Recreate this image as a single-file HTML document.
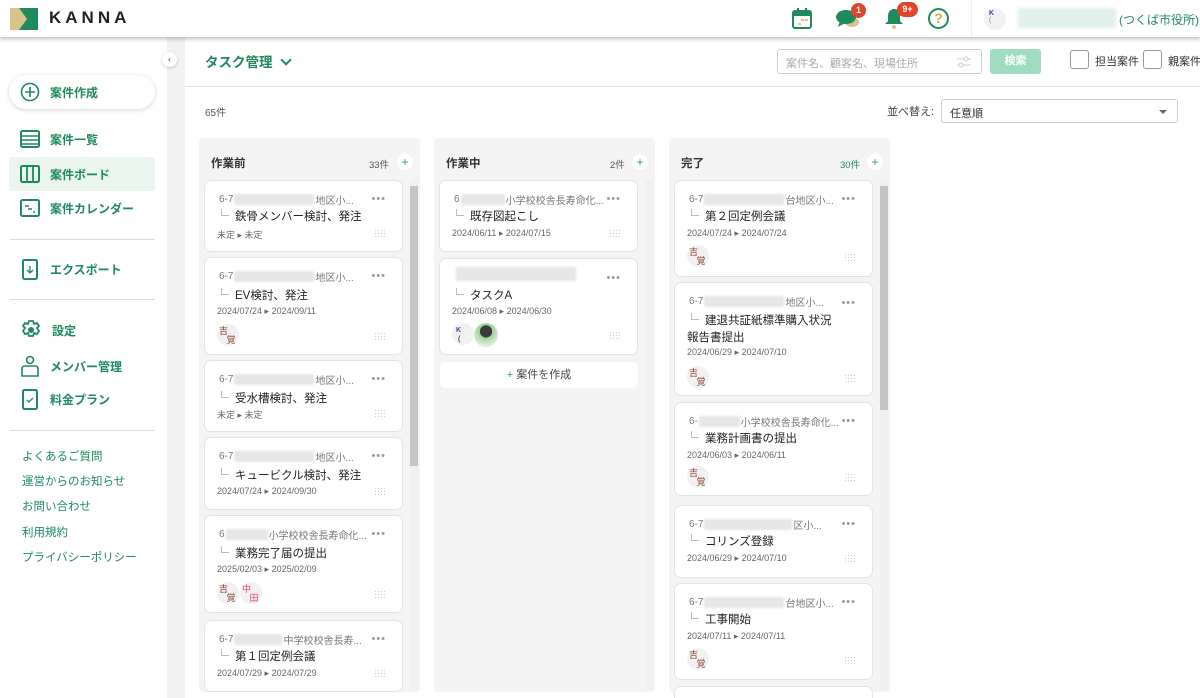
<!DOCTYPE html>
<html><head><meta charset="utf-8">
<style>
*{box-sizing:border-box;margin:0;padding:0}
body{width:1200px;height:698px;overflow:hidden;background:#fff;font-family:"Liberation Sans","Noto Sans CJK JP",sans-serif;position:relative;color:#333}
.a{position:absolute}
.hdr{left:0;top:0;width:1200px;height:37px;background:#fff;box-shadow:0 2px 4px rgba(0,0,0,.25);z-index:5}
.side{left:0;top:37px;width:167px;height:661px;background:#fff}
.strip{left:167px;top:37px;width:18px;height:661px;background:#f2f2f2}
.nav{left:20px;font-size:12px;font-weight:bold;color:#1e8a5e;display:flex;align-items:center}
.nav svg{margin-right:10px}
.hr{left:10px;width:145px;height:1px;background:#ddd}
.lk{left:22px;font-size:11.5px;color:#1e8a5e}
.col{width:221px;background:#f4f4f4;border-radius:4px;top:138px;height:554px}
.ch{font-size:11.5px;font-weight:bold;color:#333}
.cnt{font-size:9.5px;color:#555}
.plus{width:16px;height:16px;border-radius:50%;background:#fff;color:#2a9d6a;font-size:12px;line-height:16px;text-align:center}
.card{width:199px;background:#fff;border:1px solid #e3e3e3;border-radius:7px;overflow:hidden}
.l1{position:absolute;left:14px;top:11px;font-size:10px;color:#777;white-space:nowrap;display:flex;align-items:center;max-width:150px;overflow:hidden}
.blur{display:inline-block;height:11px;background:#e6e6e6;border-radius:2px;margin:0 1px;filter:blur(1px)}
.dots{position:absolute;right:16px;top:12px;color:#999;font-size:11px;letter-spacing:1px}
.t{position:absolute;left:16px;font-size:11.5px;color:#222;white-space:nowrap}
.t:before{content:"";display:inline-block;width:7px;height:6px;border-left:1px solid #bbb;border-bottom:1px solid #bbb;margin-right:6px;vertical-align:4px}
.d{position:absolute;left:12px;font-size:9px;color:#666;white-space:nowrap}
.hd{position:absolute;right:17px;width:11px;height:9px;background-image:radial-gradient(#ccc 0.7px,transparent 0.8px);background-size:3px 3px}
.av{position:absolute;width:22px;height:22px;border-radius:50%;background:#f1f1f1;font-size:9px;line-height:9px;color:#8b3a2a;padding:3px 0 0 2px}
.sb{width:8px;background:#f0f0f0}
.th{background:#c4c4c4}
</style></head><body>

<div class="a hdr">
  <svg class="a" style="left:10px;top:8px" width="28" height="22" viewBox="0 0 28 22"><rect width="28" height="22" fill="#d8c48a"/><polygon points="9,0 28,0 28,22 9,22 17,11" fill="#1e8a5e"/></svg>
  <div class="a" style="left:49px;top:8px;font-size:17px;font-weight:bold;letter-spacing:4px;color:#222">KANNA</div>
  <svg class="a" style="left:792px;top:8px" width="20" height="21" viewBox="0 0 20 21"><rect x="1" y="3" width="18" height="17" rx="2" fill="none" stroke="#1e8a5e" stroke-width="2"/><rect x="1" y="3" width="18" height="5" fill="#1e8a5e"/><rect x="5" y="0" width="2" height="5" fill="#1e8a5e"/><rect x="13" y="0" width="2" height="5" fill="#1e8a5e"/><rect x="9" y="11" width="3" height="2" fill="#d8c48a"/><rect x="13" y="11" width="3" height="2" fill="#d8c48a"/><rect x="6" y="15" width="3" height="2" fill="#d8c48a"/></svg>
  <svg class="a" style="left:836px;top:9px" width="24" height="20" viewBox="0 0 24 20"><ellipse cx="16" cy="13" rx="7" ry="5" fill="#d8c48a"/><ellipse cx="10" cy="8" rx="10" ry="7" fill="#1e8a5e"/><polygon points="4,12 2,18 9,14" fill="#1e8a5e"/></svg>
  <div class="a" style="left:851px;top:3px;width:15px;height:15px;border-radius:50%;background:#e0442b;color:#fff;font-size:9px;text-align:center;line-height:15px;font-weight:bold">1</div>
  <svg class="a" style="left:884px;top:8px" width="20" height="21" viewBox="0 0 20 21"><path d="M10 1c-4 0-6 3-6 7v5l-3 3h18l-3-3V8c0-4-2-7-6-7z" fill="#1e8a5e"/><circle cx="10" cy="19" r="2" fill="#d8c48a"/></svg>
  <div class="a" style="left:897px;top:2px;width:21px;height:15px;border-radius:8px;background:#e0442b;color:#fff;font-size:9px;text-align:center;line-height:15px;font-weight:bold">9+</div>
  <div class="a" style="left:928px;top:8px;width:21px;height:21px;border-radius:50%;border:2px solid #1e8a5e;color:#d8a92a;font-size:14px;font-weight:bold;text-align:center;line-height:17px">?</div>
  <div class="a" style="left:971px;top:0;width:1px;height:37px;background:#eee"></div>
  <div class="a" style="left:984px;top:8px;width:22px;height:22px;border-radius:50%;background:#f1f1f3;font-size:7px;color:#4a3aa0;padding:2px 0 0 5px;font-weight:bold">K<br><span style="color:#888;font-weight:normal">(</span></div>
  <div class="a" style="left:1018px;top:8px;width:98px;height:20px;background:#e1f0e8;filter:blur(1.5px)"></div>
  <div class="a" style="left:1119px;top:11px;font-size:12px;color:#1e8a5e">(つくば市役所)</div>
</div>

<div class="a side"></div>
<div class="a strip"></div>
<div class="a" style="left:162px;top:52px;width:15px;height:15px;border-radius:50%;background:#fff;box-shadow:0 1px 3px rgba(0,0,0,.2);font-size:9px;color:#555;text-align:center;line-height:14px">‹</div>

<div class="a" style="left:9px;top:75px;width:146px;height:34px;border-radius:17px;background:#fff;box-shadow:0 1px 4px rgba(0,0,0,.18)"></div>
<div class="a nav" style="top:82px"><svg width="20" height="20" viewBox="0 0 20 20"><circle cx="10" cy="10" r="8.5" fill="none" stroke="#1e8a5e" stroke-width="1.6"/><path d="M10 5v10M5 10h10" stroke="#1e8a5e" stroke-width="1.6"/></svg>案件作成</div>
<div class="a" style="left:9px;top:157px;width:146px;height:34px;background:#eaf5ef;border-radius:3px"></div>
<div class="a nav" style="top:130px"><svg width="20" height="18" viewBox="0 0 20 18"><rect x="1" y="1" width="18" height="16" rx="1.5" fill="none" stroke="#1e8a5e" stroke-width="2"/><path d="M1 6h18M1 10h18M1 14h18" stroke="#1e8a5e" stroke-width="1.5"/></svg>案件一覧</div>
<div class="a nav" style="top:165px"><svg width="20" height="18" viewBox="0 0 20 18"><rect x="1" y="1" width="18" height="16" rx="1.5" fill="none" stroke="#1e8a5e" stroke-width="2"/><path d="M7 1v16M13 1v16" stroke="#1e8a5e" stroke-width="1.8"/></svg>案件ボード</div>
<div class="a nav" style="top:199px"><svg width="20" height="18" viewBox="0 0 20 18"><rect x="1" y="1" width="18" height="16" rx="1.5" fill="none" stroke="#1e8a5e" stroke-width="2"/><path d="M5 7h4M8 10h4M13 13h2" stroke="#1e8a5e" stroke-width="1.5"/></svg>案件カレンダー</div>
<div class="a hr" style="top:239px"></div>
<div class="a nav" style="top:259px"><svg width="20" height="21" viewBox="0 0 20 21"><rect x="3" y="1" width="14" height="19" rx="1.5" fill="none" stroke="#1e8a5e" stroke-width="2"/><path d="M10 7v7M7 11l3 3 3-3" stroke="#1e8a5e" stroke-width="1.3" fill="none"/></svg>エクスポート</div>
<div class="a hr" style="top:299px"></div>
<div class="a nav" style="top:319px"><svg width="22" height="22" viewBox="0 0 22 22"><path d="M9 1h4l1 3 3-1 2 3-2 2 2 3-2 3-3-1-1 3h-4l-1-3-3 1-2-3 2-3-2-2 2-3 3 1z" transform="translate(0 1)" fill="none" stroke="#1e8a5e" stroke-width="1.8"/><circle cx="11" cy="11" r="3" fill="#1e8a5e"/></svg>設定</div>
<div class="a nav" style="top:355px"><svg width="20" height="22" viewBox="0 0 20 22"><circle cx="10" cy="5" r="3.5" fill="none" stroke="#1e8a5e" stroke-width="1.6"/><path d="M2 21v-7q0-3 3-3h10q3 0 3 3v7z" fill="none" stroke="#1e8a5e" stroke-width="1.6"/></svg>メンバー管理</div>
<div class="a nav" style="top:389px"><svg width="20" height="21" viewBox="0 0 20 21"><rect x="3" y="1" width="14" height="19" rx="1.5" fill="none" stroke="#1e8a5e" stroke-width="2"/><path d="M7 11l2 2 4-4" stroke="#1e8a5e" stroke-width="1.3" fill="none"/></svg>料金プラン</div>
<div class="a hr" style="top:430px"></div>
<div class="a lk" style="top:448px">よくあるご質問</div>
<div class="a lk" style="top:473px">運営からのお知らせ</div>
<div class="a lk" style="top:498px">お問い合わせ</div>
<div class="a lk" style="top:524px">利用規約</div>
<div class="a lk" style="top:549px">プライバシーポリシー</div>

<!-- topbar -->
<div class="a" style="left:205px;top:51px;font-size:13.5px;font-weight:bold;color:#1e8a5e">タスク管理 <span style="display:inline-block;width:8px;height:8px;border-right:2.5px solid #1e8a5e;border-bottom:2.5px solid #1e8a5e;transform:rotate(45deg);margin:0 0 3px 6px"></span></div>
<div class="a" style="left:777px;top:49px;width:205px;height:25px;border:1px solid #ccc;border-radius:3px;font-size:11px;color:#aaa;padding:5px 0 0 8px">案件名、顧客名、現場住所
<svg class="a" style="right:10px;top:6px" width="14" height="12" viewBox="0 0 14 12"><path d="M0 3h14M0 9h14" stroke="#ccc"/><circle cx="9" cy="3" r="2" fill="#fff" stroke="#ccc"/><circle cx="4" cy="9" r="2" fill="#fff" stroke="#ccc"/></svg></div>
<div class="a" style="left:990px;top:49px;width:51px;height:25px;border-radius:3px;background:#9fdcc0;color:#fff;font-size:11px;font-weight:bold;text-align:center;line-height:25px">検索</div>
<div class="a" style="left:1070px;top:50px;width:19px;height:19px;border:1px solid #999;border-radius:3px"></div>
<div class="a" style="left:1095px;top:53px;font-size:11px;color:#333;white-space:nowrap">担当案件</div>
<div class="a" style="left:1143px;top:50px;width:19px;height:19px;border:1px solid #999;border-radius:3px"></div>
<div class="a" style="left:1168px;top:53px;font-size:11px;color:#333;white-space:nowrap">親案件</div>
<div class="a" style="left:185px;top:86px;width:1015px;height:1px;background:#e3e3e3"></div>
<div class="a" style="left:205px;top:104px;font-size:10px;color:#555">65件</div>
<div class="a" style="left:887px;top:103px;font-size:11px;color:#444">並べ替え:</div>
<div class="a" style="left:941px;top:99px;width:237px;height:24px;border:1px solid #ccc;border-radius:3px;font-size:11px;color:#333;padding:5px 0 0 8px">任意順<span class="a" style="right:10px;top:10px;border-left:4px solid transparent;border-right:4px solid transparent;border-top:4px solid #666"></span></div>

<!-- columns -->
<div class="a col" style="left:199px"></div>
<div class="a col" style="left:434px"></div>
<div class="a col" style="left:669px"></div>

<div class="a ch" style="left:211px;top:155px">作業前</div><div class="a cnt" style="left:369px;top:157px">33件</div><div class="a plus" style="left:397px;top:154px">+</div>
<div class="a ch" style="left:446px;top:155px">作業中</div><div class="a cnt" style="left:610px;top:157px">2件</div><div class="a plus" style="left:632px;top:154px">+</div>
<div class="a ch" style="left:681px;top:155px">完了</div><div class="a cnt" style="left:840px;top:157px;color:#1e8a5e">30件</div><div class="a plus" style="left:867px;top:154px">+</div>

<!-- scrollbars -->
<div class="a sb" style="left:410px;top:180px;height:510px"></div><div class="a th" style="left:410px;top:186px;width:8px;height:280px"></div>
<div class="a sb" style="left:645px;top:180px;height:510px"></div>
<div class="a sb" style="left:880px;top:180px;height:510px"></div><div class="a th" style="left:880px;top:186px;width:8px;height:224px"></div>

<!-- col1 -->
<div class="a card" style="left:204px;top:180px;height:72px"><div class="l1">6-7<span class="blur" style="width:80px"></span>地区小...</div><div class="dots">•••</div><div class="t" style="top:27px">鉄骨メンバー検討、発注</div><div class="d" style="top:47px">未定 ▸ 未定</div><div class="hd" style="top:48px"></div></div>
<div class="a card" style="left:204px;top:257px;height:98px"><div class="l1">6-7<span class="blur" style="width:80px"></span>地区小...</div><div class="dots">•••</div><div class="t" style="top:29px">EV検討、発注</div><div class="d" style="top:48px">2024/07/24 ▸ 2024/09/11</div><div class="av" style="left:12px;top:66px">吉<br>&nbsp;&nbsp;&nbsp;覚</div><div class="hd" style="top:74px"></div></div>
<div class="a card" style="left:204px;top:360px;height:72px"><div class="l1">6-7<span class="blur" style="width:80px"></span>地区小...</div><div class="dots">•••</div><div class="t" style="top:29px">受水槽検討、発注</div><div class="d" style="top:47px">未定 ▸ 未定</div><div class="hd" style="top:48px"></div></div>
<div class="a card" style="left:204px;top:437px;height:73px"><div class="l1">6-7<span class="blur" style="width:80px"></span>地区小...</div><div class="dots">•••</div><div class="t" style="top:29px">キュービクル検討、発注</div><div class="d" style="top:48px">2024/07/24 ▸ 2024/09/30</div><div class="hd" style="top:49px"></div></div>
<div class="a card" style="left:204px;top:515px;height:98px"><div class="l1">6<span class="blur" style="width:42px"></span>小学校校舎長寿命化...</div><div class="dots">•••</div><div class="t" style="top:29px">業務完了届の提出</div><div class="d" style="top:48px">2025/02/03 ▸ 2025/02/09</div><div class="av" style="left:12px;top:66px">吉<br>&nbsp;&nbsp;&nbsp;覚</div><div class="av" style="left:35px;top:66px;color:#e0447a">中<br>&nbsp;&nbsp;&nbsp;田</div><div class="hd" style="top:74px"></div></div>
<div class="a card" style="left:204px;top:620px;height:72px"><div class="l1">6-7<span class="blur" style="width:48px"></span>中学校校舎長寿...</div><div class="dots">•••</div><div class="t" style="top:27px">第１回定例会議</div><div class="d" style="top:47px">2024/07/29 ▸ 2024/07/29</div><div class="hd" style="top:48px"></div></div>

<!-- col2 -->
<div class="a card" style="left:439px;top:180px;height:72px"><div class="l1">6<span class="blur" style="width:46px"></span>小学校校舎長寿命化...</div><div class="dots">•••</div><div class="t" style="top:27px">既存図起こし</div><div class="d" style="top:47px">2024/06/11 ▸ 2024/07/15</div><div class="hd" style="top:48px"></div></div>
<div class="a card" style="left:439px;top:258px;height:97px"><span class="blur a" style="left:15px;top:8px;width:120px;height:14px"></span><div class="dots" style="top:13px">•••</div><div class="t" style="top:28px">タスクA</div><div class="d" style="top:47px">2024/06/08 ▸ 2024/06/30</div><div class="av" style="left:12px;top:64px;font-size:7px;color:#4a3aa0;font-weight:bold;padding:3px 0 0 4px">K<br>&nbsp;<span style="color:#555">(</span></div><div class="a" style="left:34px;top:64px;width:24px;height:24px;border-radius:50%;background:radial-gradient(circle at 50% 35%,#3a3a3a 30%,#9ecf9a 32%,#d9efd5 70%)"></div><div class="hd" style="top:72px"></div></div>
<div class="a" style="left:440px;top:362px;width:198px;height:26px;background:#fff;border-radius:5px;font-size:11px;color:#444;text-align:center;line-height:26px"><span style="color:#2a9d6a">+</span> 案件を作成</div>

<!-- col3 -->
<div class="a card" style="left:674px;top:180px;height:97px"><div class="l1">6-7<span class="blur" style="width:80px"></span>台地区小...</div><div class="dots">•••</div><div class="t" style="top:27px">第２回定例会議</div><div class="d" style="top:47px">2024/07/24 ▸ 2024/07/24</div><div class="av" style="left:12px;top:64px">吉<br>&nbsp;&nbsp;&nbsp;覚</div><div class="hd" style="top:72px"></div></div>
<div class="a card" style="left:674px;top:282px;height:114px"><div class="l1">6-7<span class="blur" style="width:80px"></span>地区小...</div><div class="dots" style="top:14px">•••</div><div class="t" style="top:29px">建退共証紙標準購入状況</div><div class="a" style="left:12px;top:46px;font-size:11.5px;color:#222">報告書提出</div><div class="d" style="top:64px">2024/06/29 ▸ 2024/07/10</div><div class="av" style="left:12px;top:83px">吉<br>&nbsp;&nbsp;&nbsp;覚</div><div class="hd" style="top:91px"></div></div>
<div class="a card" style="left:674px;top:402px;height:94px"><div class="l1">6-<span class="blur" style="width:46px"></span>小学校校舎長寿命化...</div><div class="dots">•••</div><div class="t" style="top:27px">業務計画書の提出</div><div class="d" style="top:47px">2024/06/03 ▸ 2024/06/11</div><div class="av" style="left:12px;top:63px">吉<br>&nbsp;&nbsp;&nbsp;覚</div><div class="hd" style="top:70px"></div></div>
<div class="a card" style="left:674px;top:505px;height:73px"><div class="l1">6-7<span class="blur" style="width:88px"></span>区小...</div><div class="dots">•••</div><div class="t" style="top:27px">コリンズ登録</div><div class="d" style="top:47px">2024/06/29 ▸ 2024/07/10</div><div class="hd" style="top:48px"></div></div>
<div class="a card" style="left:674px;top:583px;height:97px"><div class="l1">6-7<span class="blur" style="width:80px"></span>台地区小...</div><div class="dots">•••</div><div class="t" style="top:27px">工事開始</div><div class="d" style="top:47px">2024/07/11 ▸ 2024/07/11</div><div class="av" style="left:12px;top:64px">吉<br>&nbsp;&nbsp;&nbsp;覚</div><div class="hd" style="top:72px"></div></div>
<div class="a card" style="left:674px;top:686px;height:12px;border-bottom:none;border-radius:7px 7px 0 0"></div>
</body></html>
